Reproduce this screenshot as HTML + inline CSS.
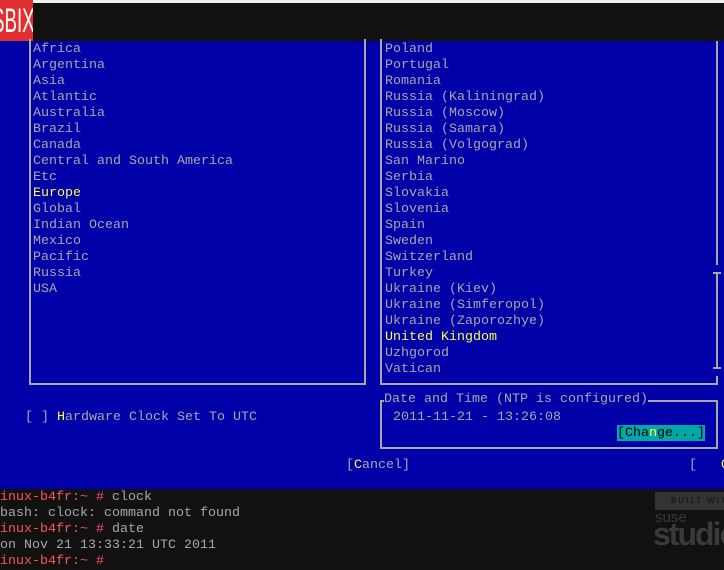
<!DOCTYPE html>
<html><head><meta charset="utf-8"><style>
*{margin:0;padding:0;box-sizing:border-box}
body{width:724px;height:567px;overflow:hidden;background:#111;position:relative;font-family:"Liberation Mono",monospace;font-size:13.33px;line-height:16px;color:#a8a8a8}
.a{position:absolute;white-space:pre}
.y{color:#fcfc54}
.r{color:#fc5454}
.b{position:absolute;border:2px solid #a8a8a8}
</style></head><body>
<div class="a" style="left:0;top:0;width:724px;height:3px;background:#eee"></div>
<div class="a" style="left:0;top:41px;width:724px;height:448px;background:#0000a8"></div>
<div class="a" style="left:0;top:0;width:33px;height:41px;background:#e03030;overflow:hidden"><span style="position:absolute;left:-8px;top:4px;font-family:'Liberation Sans',sans-serif;font-size:34px;line-height:34px;color:#fff;transform:scaleX(0.55);transform-origin:left top">SBIX</span></div>

<div class="b" style="left:29px;top:39px;width:337px;height:346px;border-top:none"></div>
<div class="b" style="left:380px;top:39px;width:338px;height:346px;border-top:none;border-right:none"></div>
<div class="a" style="left:716px;top:41px;width:2px;height:224px;background:#a8a8a8"></div>
<div class="a" style="left:716px;top:272px;width:2px;height:96px;background:#a8a8a8"></div>
<div class="a" style="left:713px;top:272px;width:8px;height:2px;background:#a8a8a8"></div>
<div class="a" style="left:713px;top:367px;width:8px;height:2px;background:#a8a8a8"></div>
<div class="a" style="left:716px;top:376px;width:2px;height:9px;background:#a8a8a8"></div>

<div class="a" style="left:33px;top:42px">Africa
Argentina
Asia
Atlantic
Australia
Brazil
Canada
Central and South America
Etc
<span class="y">Europe</span>
Global
Indian Ocean
Mexico
Pacific
Russia
USA</div>

<div class="a" style="left:385px;top:42px">Poland
Portugal
Romania
Russia (Kaliningrad)
Russia (Moscow)
Russia (Samara)
Russia (Volgograd)
San Marino
Serbia
Slovakia
Slovenia
Spain
Sweden
Switzerland
Turkey
Ukraine (Kiev)
Ukraine (Simferopol)
Ukraine (Zaporozhye)
<span class="y">United Kingdom</span>
Uzhgorod
Vatican</div>

<div class="a" style="left:25px;top:410px">[ ] <span class="y">H</span>ardware Clock Set To UTC</div>

<div class="b" style="left:380px;top:400px;width:338px;height:49px"></div>
<div class="a" style="left:384px;top:394px;background:#0000a8;height:12px;line-height:12px">Date and Time (NTP is configured)</div>
<div class="a" style="left:393px;top:410px">2011-11-21 - 13:26:08</div>
<div class="a" style="left:617px;top:425px;background:#00a8a8;color:#000;height:16px;line-height:16px;padding-top:1px">[Cha<span class="y">n</span>ge...]</div>

<div class="a" style="left:346px;top:458px">[<span class="y">C</span>ancel]</div>
<div class="a" style="left:689px;top:458px">[   <span class="y">OK</span></div>

<div class="a" style="left:0;top:490px"><span class="r">inux-b4fr:~ #</span> clock
bash: clock: command not found
<span class="r">inux-b4fr:~ #</span> date
on Nov 21 13:33:21 UTC 2011
<span class="r">inux-b4fr:~ #</span></div>

<div class="a" style="left:655px;top:492px;width:69px;height:18px;background:#333;color:#111;font-family:'Liberation Sans',sans-serif;font-size:8px;line-height:18px;letter-spacing:2px;padding-left:16px">BUILT WITH</div>
<div class="a" style="left:655px;top:510px;color:#3a3a3a;font-family:'Liberation Sans',sans-serif;font-size:15px;line-height:16px">suse</div>
<div class="a" style="left:653px;top:518px;color:#3a3a3a;font-family:'Liberation Sans',sans-serif;font-weight:bold;font-size:32px;line-height:32px;letter-spacing:-2px">studio</div>
</body></html>
